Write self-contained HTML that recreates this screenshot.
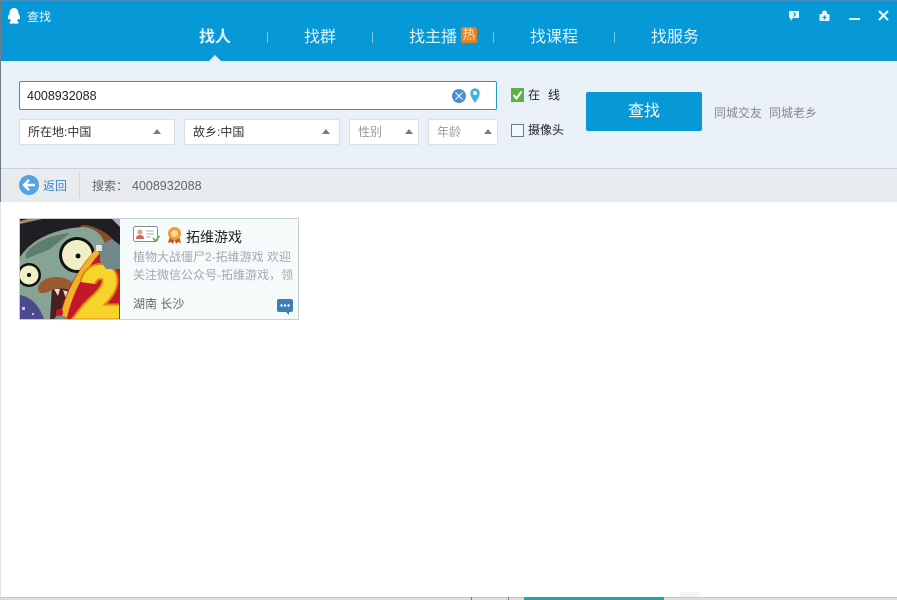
<!DOCTYPE html>
<html lang="zh"><head><meta charset="utf-8"><title>查找</title>
<style>
html,body{margin:0;padding:0;width:897px;height:600px;overflow:hidden;background:#fff;font-family:"Liberation Sans","Noto Sans CJK SC",sans-serif}
.a{position:absolute;white-space:nowrap}
.nav{color:#e3f3fb;font-size:16px;line-height:22px;top:27px}
.sep{top:32px;width:1px;height:11px;background:#7cc6e6}
.sel{top:119px;height:24px;background:#fff;border:1px solid #d9dfe4;border-radius:2px;box-sizing:content-box}
.tx{font-size:12px;line-height:16px}
.tri{width:0;height:0;border-left:4px solid transparent;border-right:4px solid transparent;border-bottom:5px solid #6a8290;top:129px}
</style></head>
<body>
<div class="a" style="left:0;top:0;width:897px;height:600px;overflow:hidden">
<div class="a" style="left:0;top:0;width:897px;height:61px;background:#0798d8"></div>
<div class="a" style="left:0;top:0;width:897px;height:1px;background:#3f8fc4"></div>
<div class="a" style="left:0;top:61px;width:897px;height:107px;background:#e9f0f8"></div>
<div class="a" style="left:0;top:168px;width:897px;height:1px;background:#c9cfd3"></div>
<div class="a" style="left:0;top:169px;width:897px;height:33px;background:#e9ecee"></div>
<div class="a" style="left:0;top:0;width:1px;height:202px;background:#6d7c88"></div>
<div class="a" style="left:0;top:202px;width:1px;height:396px;background:#e6e6e6"></div>
<div class="a" style="left:680px;top:592px;width:20px;height:5px;background:#f4f4f4"></div>
<div class="a" style="left:0;top:597px;width:897px;height:1px;background:#c9c9c9"></div>
<div class="a" style="left:0;top:598px;width:897px;height:2px;background:#dcdcdc"></div>
<div class="a" style="left:524px;top:597px;width:140px;height:3px;background:#27a39b"></div>
<div class="a" style="left:471px;top:597px;width:1px;height:3px;background:#777"></div>
<div class="a" style="left:508px;top:597px;width:1px;height:3px;background:#777"></div>

<svg class="a" style="left:7px;top:8px" width="14" height="17" viewBox="0 0 14 17"><path d="M7 0C3.800 0 2.600 2.600 2.600 5.200 1.200 7.500.6 9.700 1.200 11.300c.5.300 1-.3 1.400-.9.300 1 .8 1.800 1.500 2.500-1.200.5-1.800 1.200-1.600 2 .5 1 3 1.100 4.500.5 1.500.6 4 .5 4.500-.5.200-.8-.4-1.500-1.600-2 .7-.7 1.200-1.500 1.500-2.500.4.600.9 1.200 1.400.9.600-1.600 0-3.800-1.400-6.100C11.400 2.600 10.200 0 7 0z" fill="#fff"/></svg>
<div class="a" style="left:27px;top:9px;color:#f2fafe;font-size:12px;line-height:17px">查找</div>

<div class="a nav" style="left:199px;font-weight:700;color:#ddeff8">找人</div>
<div class="a sep" style="left:267px"></div>
<div class="a nav" style="left:304px">找群</div>
<div class="a sep" style="left:372px"></div>
<div class="a nav" style="left:409px">找主播</div>
<div class="a" style="left:461px;top:27px;width:16px;height:16px;background:#e77f22;border-radius:2px;color:#ffe9b8;font-size:13px;line-height:16px;text-align:center">热</div>
<div class="a sep" style="left:493px"></div>
<div class="a nav" style="left:530px">找课程</div>
<div class="a sep" style="left:614px"></div>
<div class="a nav" style="left:651px">找服务</div>
<div class="a" style="left:209px;top:55px;width:0;height:0;border-left:6px solid transparent;border-right:6px solid transparent;border-bottom:6px solid #e9f0f8"></div>

<svg class="a" style="left:788px;top:10px" width="12" height="12" viewBox="0 0 12 12"><path d="M1 1h10v7H5L2.500 11V8H1z" fill="#eaf6fc"/><path d="M5.500 2.500 7.500 4.500 5.500 6.500" stroke="#0798d8" stroke-width="1.200" fill="none"/></svg>
<svg class="a" style="left:819px;top:10px" width="11" height="12" viewBox="0 0 11 12"><path d="M3 4V3a2.500 2.500 0 0 1 5 0v1h1.500a1 1 0 0 1 1 1v5a1 1 0 0 1-1 1h-8a1 1 0 0 1-1-1V5a1 1 0 0 1 1-1z" fill="#eaf6fc"/><path d="M5.500 5.500v4M3.500 7.500h4" stroke="#0798d8" stroke-width="1.200"/></svg>
<div class="a" style="left:849px;top:18px;width:11px;height:2px;background:#eaf6fc"></div>
<svg class="a" style="left:878px;top:10px" width="11" height="11" viewBox="0 0 11 11"><path d="M1 1l9 9M10 1l-9 9" stroke="#f2fafe" stroke-width="2"/></svg>

<div class="a" style="left:19px;top:81px;width:476px;height:27px;background:#fff;border:1px solid #1f9fbd;border-radius:2px"></div>
<div class="a" style="left:27px;top:88px;font-size:12.500px;line-height:16px;color:#222">4008932088</div>
<svg class="a" style="left:452px;top:89px" width="14" height="14" viewBox="0 0 14 14"><circle cx="7" cy="7" r="7" fill="#4a8fd0"/><path d="M3.500 3.500l7 7M10.500 3.500l-7 7" stroke="#e9f3fb" stroke-width="1.200"/></svg>
<svg class="a" style="left:470px;top:88px" width="10" height="15" viewBox="0 0 10 15"><path d="M5 15C2.500 11 .3 8.500.3 5a4.700 4.700 0 0 1 9.400 0C9.700 8.500 7.500 11 5 15z" fill="#3db5d6"/><circle cx="5" cy="5" r="2" fill="#fff"/></svg>

<div class="a sel" style="left:19px;width:154px"></div>
<div class="a tx" style="left:28px;top:124px;color:#333">所在地:中国</div>
<div class="a tri" style="left:153px"></div>
<div class="a sel" style="left:184px;width:154px"></div>
<div class="a tx" style="left:193px;top:124px;color:#333">故乡:中国</div>
<div class="a tri" style="left:322px"></div>
<div class="a sel" style="left:349px;width:68px"></div>
<div class="a tx" style="left:358px;top:124px;color:#999">性别</div>
<div class="a tri" style="left:405px"></div>
<div class="a sel" style="left:428px;width:68px"></div>
<div class="a tx" style="left:437px;top:124px;color:#999">年龄</div>
<div class="a tri" style="left:484px"></div>

<svg class="a" style="left:511px;top:88px" width="13" height="14" viewBox="0 0 13 14"><rect width="13" height="14" fill="#5cb04a"/><path d="M2.500 7l3 3.500 5-7" stroke="#fff" stroke-width="2" fill="none"/></svg>
<div class="a tx" style="left:528px;top:87px;color:#222">在</div>
<div class="a tx" style="left:548px;top:87px;color:#222">线</div>
<div class="a" style="left:511px;top:124px;width:11px;height:11px;background:#f3f7fb;border:1px solid #5e7c92"></div>
<div class="a tx" style="left:528px;top:122px;color:#222">摄像头</div>

<div class="a" style="left:586px;top:92px;width:116px;height:39px;background:#0798d8;border-radius:2px;color:#fff;font-size:16px;line-height:39px;text-align:center">查找</div>
<div class="a tx" style="left:714px;top:105px;color:#888">同城交友</div>
<div class="a tx" style="left:769px;top:105px;color:#888">同城老乡</div>

<svg class="a" style="left:19px;top:175px" width="20" height="20" viewBox="0 0 20 20"><circle cx="10" cy="10" r="10" fill="#55a3e0"/><path d="M16 10H5M10 5l-5 5 5 5" stroke="#fff" stroke-width="2.400" fill="none"/></svg>
<div class="a tx" style="left:43px;top:178px;color:#3b86c6">返回</div>
<div class="a" style="left:79px;top:172px;width:1px;height:26px;background:#d3d8db"></div>
<div class="a tx" style="left:92px;top:178px;color:#666">搜索：</div>
<div class="a" style="left:132px;top:178px;color:#666;font-size:12.500px;line-height:16px">4008932088</div>

<div class="a" style="left:19px;top:218px;width:278px;height:100px;background:#f5fafa;border:1px solid #c3cfd3"></div>
<svg class="a" style="left:20px;top:219px" width="100" height="100" viewBox="0 0 100 100">
<rect width="100" height="100" fill="#1e1e24"/>
<path d="M0 5 22 0H8L0 2z" fill="#a88a5c"/>
<path d="M92 0h8v8z" fill="#b9a9c9"/>
<path d="M62 6C78 6 94 18 100 30V40L84 26C78 18 70 12 58 10z" fill="#8a4a2a"/>
<path d="M0 100V38C10 22 32 10 62 8 76 8 86 18 86 34L72 100z" fill="#86a394"/>
<path d="M6 34C18 20 34 16 50 14L30 30C22 34 14 36 6 40z" fill="#5f7d6c"/>
<path d="M0 76C10 78 18 84 24 100H0z" fill="#4b4a8e"/>
<path d="M2 88h3v3H2zM12 94h2v2h-2z" fill="#c9c6ef"/>
<circle cx="57" cy="36" r="18" fill="#111"/><circle cx="57" cy="36" r="15" fill="#f1efc6"/><circle cx="58" cy="37" r="2.500" fill="#111"/>
<circle cx="9" cy="56" r="12" fill="#111"/><circle cx="9" cy="56" r="9.500" fill="#f1efc6"/><circle cx="9" cy="56" r="2" fill="#111"/>
<path d="M32 68C34 66 50 68 54 74L46 100H30z" fill="#4a1f22"/>
<path d="M34 70l6 0-2 7zM43 71l6 2-3 7z" fill="#e5e0c9"/>
<path d="M20 74C14 68 22 58 36 58c12 0 22 6 24 22-6-8-14-12-24-10-6 1-10 5-16 4z" fill="#9a5b30"/>
<path d="M34 100l6-8 12 0 4 8z" fill="#6f8f8c"/>
<path d="M78 28C58 48 44 76 40 96l8 4H100V40L88 28z" fill="#c4182a"/>
<path d="M76 30C58 50 45 76 41 96l6 3C52 76 64 52 80 34z" fill="#eeb327"/>
<path d="M68 64C70 50 90 48 90 62 90 74 74 84 67 93H99" fill="none" stroke="#d98a12" stroke-width="17"/>
<path d="M68 64C70 50 90 48 90 62 90 74 74 84 67 93H99" fill="none" stroke="#f7d32c" stroke-width="13"/>
<path d="M80 26l12-6 8 6v24H86l-6-8z" fill="#71898a"/>
<rect x="76" y="26" width="6" height="6" fill="#e6e6da"/>
<rect x="36" y="90" width="7" height="7" rx="3" fill="#c4182a"/>
</svg>

<svg class="a" style="left:133px;top:226px" width="28" height="18" viewBox="0 0 28 18"><rect x=".5" y=".5" width="24" height="15" rx="2" fill="#fff" stroke="#8a8a8a"/><circle cx="7" cy="6" r="2.500" fill="#e2a080"/><path d="M3 13c0-3 2-4 4-4s4 1 4 4z" fill="#d0655a"/><path d="M13 5h8M13 8h8M13 11h5" stroke="#aab2b8"/><path d="M20 12l2.500 3 4-5" stroke="#5cb04a" stroke-width="1.600" fill="none"/></svg>
<svg class="a" style="left:167px;top:227px" width="15" height="17" viewBox="0 0 15 17"><path d="M3 9 1 16l3-1 2 2 2-6zM12 9l2 7-3-1-2 2-2-6z" fill="#c9521e"/><circle cx="7.500" cy="6.500" r="6.500" fill="#efa030"/><circle cx="7.500" cy="6.500" r="3.500" fill="#f8d9a0"/></svg>
<div class="a" style="left:186px;top:228px;font-size:14px;line-height:18px;color:#222">拓维游戏</div>
<div class="a tx" style="left:133px;top:249px;color:#a3a9ad;width:160px;overflow:hidden">植物大战僵尸2-拓维游戏 欢迎</div>
<div class="a tx" style="left:133px;top:267px;color:#a3a9ad;width:160px;overflow:hidden">关注微信公众号-拓维游戏，领</div>
<div class="a tx" style="left:133px;top:296px;color:#666">湖南 长沙</div>
<svg class="a" style="left:277px;top:299px" width="16" height="16" viewBox="0 0 16 16"><path d="M2 0h12a2 2 0 0 1 2 2v9a2 2 0 0 1-2 2h-2v3l-3-3H2a2 2 0 0 1-2-2V2a2 2 0 0 1 2-2z" fill="#3f7fb8"/><circle cx="4.500" cy="6.500" r="1.200" fill="#fff"/><circle cx="8" cy="6.500" r="1.200" fill="#fff"/><circle cx="11.500" cy="6.500" r="1.200" fill="#fff"/></svg>
</div>
</body></html>
